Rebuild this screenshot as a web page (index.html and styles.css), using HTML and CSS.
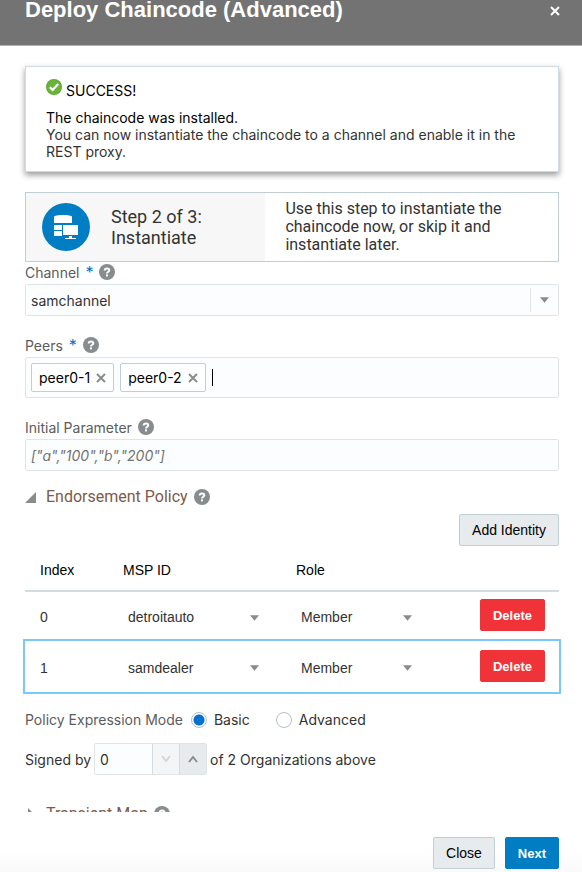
FILE: index.html
```html
<!DOCTYPE html>
<html lang="en">
<head>
<meta charset="utf-8">
<meta name="viewport" content="width=device-width, initial-scale=1">
<title>Deploy Chaincode (Advanced)</title>
<link rel="stylesheet" href="styles.css">
</head>
<body>
<svg class="defs" aria-hidden="true">
  <symbol id="help" viewBox="0 0 16 16">
    <circle cx="8" cy="8" r="8" fill="#878c8f"/>
    <path d="M5.7 6.4C5.7 4.9 6.7 4.4 8 4.4s2.3.7 2.3 1.9c0 1.5-2.3 1.4-2.3 3.2" fill="none" stroke="#fff" stroke-width="2"/>
    <rect x="7" y="10.4" width="2" height="2" fill="#fff"/>
  </symbol>
  <symbol id="cross" viewBox="0 0 10 10">
    <path d="M1 1l8 8M9 1l-8 8" fill="none" stroke="currentColor" stroke-width="2"/>
  </symbol>
  <symbol id="arrow" viewBox="0 0 10 6"><path d="M0 0h10L5 6z" fill="#878c8f"/></symbol>
</svg>
<main class="dialog">
  <header class="dialog-header">
    <h1>Deploy Chaincode (Advanced)</h1>
    <button class="dismiss" type="button" aria-label="Close dialog"><svg class="cross"><use href="#cross"/></svg></button>
  </header>

  <div class="dialog-body">
    <section class="alert">
      <p class="alert-title">
        <svg class="help" viewBox="0 0 16 16" aria-hidden="true"><circle cx="8" cy="8" r="8" fill="#5ea82f"/><circle cx="8" cy="8" r="7" fill="#6ab43a"/><path d="M3.8 8.3l2.8 2.6 5.6-6" fill="none" stroke="#fff" stroke-width="2.2"/></svg>
        <span>SUCCESS!</span>
      </p>
      <p class="alert-lead">The chaincode was installed.</p>
      <p>You can now instantiate the chaincode to a channel and enable it in the REST proxy.</p>
    </section>

    <section class="step">
      <div class="step-name">
        <svg class="step-icon" viewBox="0 0 48 48" aria-hidden="true">
          <circle cx="24" cy="24" r="24" fill="#007dc3"/>
          <path d="M12 14c0-2.6 18-2.6 18 0v6H12z" fill="#fff"/>
          <path d="M12 22h8v5h-8zM12 28h8v5h-8z" fill="#fff"/>
          <path d="M20 21h17v12H20z" fill="#007dc3"/>
          <path d="M21 22h15v10H21zM27 33h3v2h4v1H23v-1h4z" fill="#fff"/>
        </svg>
        <h2>Step 2 of 3:<br>Instantiate</h2>
      </div>
      <p class="step-text">Use this step to instantiate the chaincode now, or skip it and instantiate later.</p>
    </section>

    <div class="field">
      <div class="label-row">
        <label for="channel">Channel</label><span class="required">*</span>
        <svg class="help"><use href="#help"/></svg>
      </div>
      <div class="combo">
        <select id="channel"><option>samchannel</option></select>
        <span class="combo-arrow"><svg class="arrow"><use href="#arrow"/></svg></span>
      </div>
    </div>

    <div class="field">
      <div class="label-row">
        <label for="peers">Peers</label><span class="required">*</span>
        <svg class="help"><use href="#help"/></svg>
      </div>
      <div class="chips">
        <span class="chip">peer0-1<button type="button" aria-label="Remove peer0-1"><svg class="cross"><use href="#cross"/></svg></button></span>
        <span class="chip">peer0-2<button type="button" aria-label="Remove peer0-2"><svg class="cross"><use href="#cross"/></svg></button></span>
        <span class="caret"></span>
        <input id="peers" type="text">
      </div>
    </div>

    <div class="field">
      <div class="label-row">
        <label for="param">Initial Parameter</label>
        <svg class="help"><use href="#help"/></svg>
      </div>
      <input class="text-input" id="param" type="text" placeholder='["a","100","b","200"]'>
    </div>

    <section class="policy">
      <h3 class="section-title">
        <svg class="toggle" viewBox="0 0 12 12" aria-hidden="true"><path d="M0 12L11 1v11z" fill="#878c8f"/></svg>
        <span>Endorsement Policy</span>
        <svg class="help"><use href="#help"/></svg>
      </h3>
      <div class="toolbar"><button class="button" type="button">Add Identity</button></div>

      <table class="identities">
        <thead>
          <tr><th class="col-index">Index</th><th class="col-msp">MSP ID</th><th class="col-role">Role</th><th></th></tr>
        </thead>
        <tbody>
          <tr>
            <td>0</td>
            <td><div class="cell-select"><select aria-label="MSP ID 0"><option>detroitauto</option></select><svg class="arrow"><use href="#arrow"/></svg></div></td>
            <td><div class="cell-select"><select aria-label="Role 0"><option>Member</option></select><svg class="arrow"><use href="#arrow"/></svg></div></td>
            <td class="col-action"><button class="button danger" type="button">Delete</button></td>
          </tr>
          <tr class="selected">
            <td>1</td>
            <td><div class="cell-select"><select aria-label="MSP ID 1"><option>samdealer</option></select><svg class="arrow"><use href="#arrow"/></svg></div></td>
            <td><div class="cell-select"><select aria-label="Role 1"><option>Member</option></select><svg class="arrow"><use href="#arrow"/></svg></div></td>
            <td class="col-action"><button class="button danger" type="button">Delete</button></td>
          </tr>
        </tbody>
      </table>

      <div class="mode" role="radiogroup" aria-labelledby="mode-label">
        <span class="mode-label" id="mode-label">Policy Expression Mode</span>
        <label><input type="radio" name="mode" checked>Basic</label>
        <label><input type="radio" name="mode">Advanced</label>
      </div>

      <div class="signed">
        <label for="signed">Signed by</label>
        <div class="spinner">
          <input id="signed" type="text" value="0">
          <button type="button" aria-label="Decrease" disabled><svg viewBox="0 0 10 8"><path d="M1 1l4 5 4-5" fill="none" stroke="#d3d6d8" stroke-width="2"/></svg></button>
          <button type="button" aria-label="Increase"><svg viewBox="0 0 10 8"><path d="M1 7l4-5 4 5" fill="none" stroke="#878c8f" stroke-width="2"/></svg></button>
        </div>
        <span>of 2 Organizations above</span>
      </div>
    </section>

    <h3 class="section-title">
      <svg class="toggle" viewBox="0 0 12 12" aria-hidden="true"><path d="M3 0l6 6-6 6z" fill="#878c8f"/></svg>
      <span>Transient Map</span>
      <svg class="help"><use href="#help"/></svg>
    </h3>
  </div>

  <footer class="dialog-footer">
    <button class="button" type="button">Close</button>
    <button class="button primary" type="button">Next</button>
  </footer>
</main>
</body>
</html>
```

FILE: styles.css
```css
* { box-sizing: border-box; }

body {
  margin: 0;
  background: #fff;
  color: #333;
  font: 14px/17px Inter, "Liberation Sans", sans-serif;
}

h1, h2, h3, p { margin: 0; font-weight: 400; }

button, input, select { font: inherit; color: inherit; }

svg { display: block; flex: none; }

.defs { position: absolute; width: 0; height: 0; }
.help { width: 16px; height: 16px; }
.cross { width: 10px; height: 10px; }
.arrow { width: 9px; height: 6px; }

.dialog { display: flex; flex-direction: column; height: 100vh; }

.dialog-header {
  display: flex;
  align-items: flex-start;
  justify-content: space-between;
  padding: 0 22px 21px 25px;
  background: #737373;
  border-bottom: 1px solid #a9b4ba;
  color: #fff;
}

.dialog-header h1 { font-family: "Liberation Sans", sans-serif; font-size: 22px; line-height: 24px; font-weight: 700; margin-top: -2px; padding-bottom: 2px; }

.dismiss { margin-top: 6px; padding: 0; border: 0; background: none; }

.dialog-body {
  flex: 1;
  min-height: 0;
  overflow: hidden;
  padding: 20px 23px 0 25px;
}

.alert {
  padding: 12px 20px 11px;
  border: 1px solid #d0dbe2;
  background: #fff;
  box-shadow: 0 3px 6px rgba(0, 0, 0, .4);
}

.alert-title { display: flex; gap: 4px; margin-bottom: 10px; color: #000; }
.alert-title span { padding-top: 3px; }
.alert-lead { color: #000; }

.step {
  display: flex;
  margin-top: 20px;
  border: 1px solid #c0ced6;
  color: #333;
  font-family: Roboto, "Liberation Sans", sans-serif;
}

.step-name {
  display: flex;
  align-items: center;
  flex: 0 0 45%;
  gap: 21px;
  padding-left: 16px;
  background: #f7f7f7;
}

.step-icon { width: 48px; height: 48px; }
.step h2 { font-size: 18px; line-height: 21px; }
.step-text { padding: 7px 40px 7px 20px; font-size: 16px; line-height: 18px; }

.field + .field { margin-top: 19px; }

.label-row {
  display: flex;
  align-items: center;
  gap: 6px;
  height: 22px;
  padding-bottom: 2px;
  color: #5c5c5c;
}

.required { color: #0572ce; font-size: 16px; }

.combo, .chips, .text-input {
  border: 1px solid #dfe4e7;
  border-radius: 2px;
  background: #fcfdfe;
}

.combo { display: grid; height: 32px; }
.combo select, .combo-arrow { grid-area: 1 / 1; }
.combo select, .cell-select select { appearance: none; border: 0; background: none; }
.combo select { padding: 0 32px 0 5px; }

.combo-arrow {
  display: flex;
  align-items: center;
  justify-self: end;
  margin: 3px 0;
  padding: 0 9px;
  border-left: 1px solid #dfe4e7;
  pointer-events: none;
}

.chips { display: flex; align-items: center; gap: 6px; padding: 5px; }

.chip {
  display: flex;
  align-items: center;
  gap: 6px;
  height: 29px;
  padding: 0 7px;
  border: 1px solid #c0ced6;
  border-radius: 2px;
  background: #fff;
  color: #000;
}

.chip button { padding: 0; border: 0; background: none; color: #878c8f; }
.caret { width: 1px; height: 17px; background: #000; }
.chips input { flex: 1; min-width: 0; border: 0; background: none; outline: 0; }

.text-input { display: block; width: 100%; height: 32px; padding: 0 5px; }
.text-input::placeholder { color: #737373; font-style: italic; opacity: 1; }

.section-title {
  display: flex;
  align-items: center;
  color: #7d5a4b;
  font-family: Roboto, "Liberation Sans", sans-serif;
  font-size: 16px;
  line-height: 20px;
}

.toggle { width: 12px; height: 12px; margin-right: 9px; }
.section-title .help { margin-left: 6px; }

.policy { padding: 16px 0 29px; }
.toolbar { display: flex; justify-content: flex-end; margin-top: 7px; }

.button {
  height: 32px;
  padding: 0 12px;
  border: 1px solid #c0ced6;
  border-radius: 2px;
  background: #e7ebee;
  color: #000;
  font-family: "Liberation Sans", sans-serif;
}

.button.danger, .button.primary { color: #fff; font-size: 13px; font-weight: 700; }
.button.danger { border-color: #ef3338; background: #ef3338; }
.button.primary { border-color: #007dc3; background: #007dc3; }

.identities {
  width: 100%;
  border-collapse: collapse;
  table-layout: fixed;
  font-family: "Liberation Sans", sans-serif;
}

.identities th { height: 45px; padding: 5px 0 0 15px; border-bottom: 2px solid #d0dbe2; color: #000; font-weight: 400; text-align: left; }
.identities td { padding: 2px 0 0 15px; }
.identities .selected td { padding-top: 3px; }
.identities .selected { outline: 2px solid #78c9fa; }
.col-index { width: 83px; }
.col-msp { width: 173px; }
.col-role { width: 153px; }
.identities .col-action { padding: 7px 14px 10px 0; text-align: right; }
.identities .selected .col-action { padding-top: 9px; }

.cell-select { display: flex; align-items: center; padding: 0 22px 0 5px; }
.cell-select select { flex: 1; min-width: 0; padding: 0; }

.mode { display: flex; align-items: center; margin-top: 19px; }
.mode-label { margin-right: 8px; color: #5c5c5c; }
.mode label { display: flex; align-items: center; gap: 7px; }
.mode label + label { margin-left: 26px; }

.mode input {
  appearance: none;
  width: 16px;
  height: 16px;
  margin: 0;
  border: 1px solid #b4bfc6;
  border-radius: 50%;
  background: #fff;
}

.mode input:checked { background: radial-gradient(circle, #0572ce 5px, #fff 6px); }

.signed { display: flex; align-items: center; gap: 3px; margin-top: 15px; }

.spinner { display: flex; height: 32px; border: 1px solid #dfe4e7; border-radius: 2px; }
.spinner input { width: 57px; padding: 0 5px; border: 0; background: #fcfdfe; }

.spinner button {
  display: flex;
  align-items: center;
  justify-content: center;
  width: 27px;
  padding: 0;
  border: 0;
  border-left: 1px solid #d0dbe2;
  background: #e7ebee;
}

.spinner button:disabled { background: #f4f5f7; }
.spinner svg { width: 10px; height: 8px; }

.dialog-footer {
  display: flex;
  justify-content: flex-end;
  gap: 10px;
  padding: 25px 23px 3px;
  background: linear-gradient(#fff 60%, #fafafa);
}
```
